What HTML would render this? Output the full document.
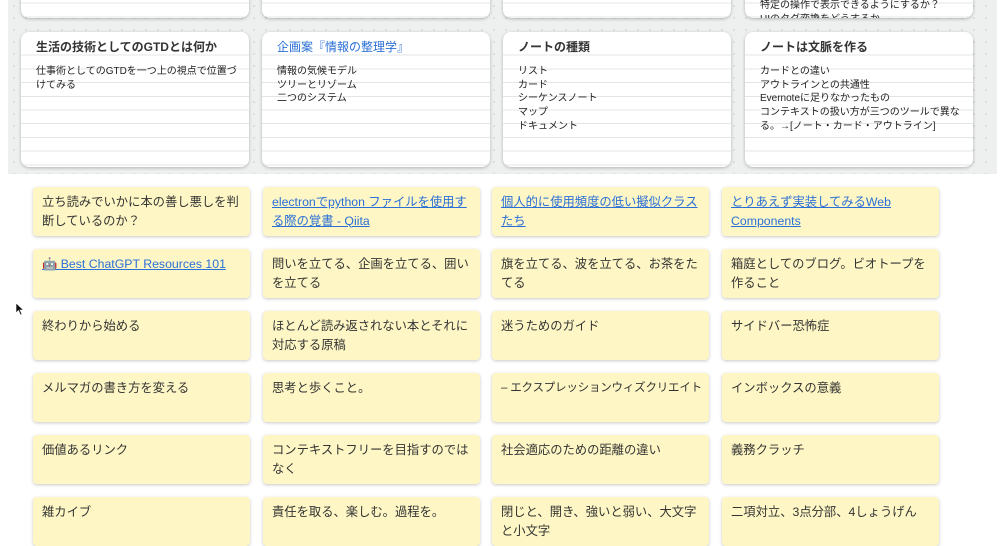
<!DOCTYPE html>
<html><head><meta charset="utf-8"><style>
*{margin:0;padding:0;box-sizing:border-box}
body{width:1000px;height:528px;overflow:hidden;background:#fff;font-family:"Liberation Sans","Noto Sans CJK JP",sans-serif;position:relative}
.gray{position:absolute;left:8px;top:0;width:989px;height:174px;background-color:#eef0f0;background-image:radial-gradient(circle,#d4d8d8 0.8px,transparent 1px);background-size:12px 12px}
.c{position:absolute;width:228px;background:#fff;border-radius:8px;box-shadow:0 1px 3px rgba(0,0,0,.25);overflow:hidden;
background-image:repeating-linear-gradient(to bottom,transparent 0,transparent 12.7px,#e3e5e5 12.7px,#e3e5e5 13.7px);background-position:0 10px;padding:8px 10px 0 15px;font-size:10px;color:#222;line-height:13.7px}
.c h3{font-size:12px;font-weight:bold;color:#333;margin-bottom:11px;line-height:14px}
.c h3.l{color:#2a6fd6;font-weight:normal}
.y{position:absolute;width:217px;height:49px;background:#fef7c5;border-radius:4px;box-shadow:0 1px 3px rgba(0,0,0,.22);padding:6px 9px;font-size:12.3px;line-height:18.5px;color:#333}
.y a{color:#2a6fd6;text-decoration:underline}
</style></head><body>
<div class="gray"></div>
<div class="c" style="left:21px;top:-20px;height:38px"></div>
<div class="c" style="left:262px;top:-20px;height:38px"></div>
<div class="c" style="left:503px;top:-20px;height:38px"></div>
<div class="c" style="left:745px;top:-20px;height:38px;padding-top:19px">特定の操作で表示できるようにするか？<br>UIのタグ変換をどうするか</div>

<div class="c" style="left:21px;top:32px;height:135px"><h3>生活の技術としてのGTDとは何か</h3>仕事術としてのGTDを一つ上の視点で位置づけてみる</div>
<div class="c" style="left:262px;top:32px;height:135px"><h3 class="l">企画案『情報の整理学』</h3>情報の気候モデル<br>ツリーとリゾーム<br>二つのシステム</div>
<div class="c" style="left:503px;top:32px;height:135px"><h3>ノートの種類</h3>リスト<br>カード<br>シーケンスノート<br>マップ<br>ドキュメント</div>
<div class="c" style="left:745px;top:32px;height:135px"><h3>ノートは文脈を作る</h3>カードとの違い<br>アウトラインとの共通性<br>Evernoteに足りなかったもの<br>コンテキストの扱い方が三つのツールで異なる。→[ノート・カード・アウトライン]</div>

<div class="y" style="left:33px;top:187px">立ち読みでいかに本の善し悪しを判断しているのか？</div>
<div class="y" style="left:263px;top:187px"><a>electronでpython ファイルを使用する際の覚書 - Qiita</a></div>
<div class="y" style="left:492px;top:187px"><a>個人的に使用頻度の低い擬似クラスたち</a></div>
<div class="y" style="left:722px;top:187px"><a>とりあえず実装してみるWeb Components</a></div>

<div class="y" style="left:33px;top:249px"><a>🤖 Best ChatGPT Resources 101</a></div>
<div class="y" style="left:263px;top:249px">問いを立てる、企画を立てる、囲いを立てる</div>
<div class="y" style="left:492px;top:249px">旗を立てる、波を立てる、お茶をたてる</div>
<div class="y" style="left:722px;top:249px">箱庭としてのブログ。ビオトープを作ること</div>

<div class="y" style="left:33px;top:311px">終わりから始める</div>
<div class="y" style="left:263px;top:311px">ほとんど読み返されない本とそれに対応する原稿</div>
<div class="y" style="left:492px;top:311px">迷うためのガイド</div>
<div class="y" style="left:722px;top:311px">サイドバー恐怖症</div>

<div class="y" style="left:33px;top:373px">メルマガの書き方を変える</div>
<div class="y" style="left:263px;top:373px">思考と歩くこと。</div>
<div class="y" style="left:492px;top:373px;white-space:nowrap;font-size:11.5px;letter-spacing:-0.2px">– エクスプレッションウィズクリエイト</div>
<div class="y" style="left:722px;top:373px">インボックスの意義</div>

<div class="y" style="left:33px;top:435px">価値あるリンク</div>
<div class="y" style="left:263px;top:435px">コンテキストフリーを目指すのではなく</div>
<div class="y" style="left:492px;top:435px">社会適応のための距離の違い</div>
<div class="y" style="left:722px;top:435px">義務クラッチ</div>

<div class="y" style="left:33px;top:497px">雑カイブ</div>
<div class="y" style="left:263px;top:497px">責任を取る、楽しむ。過程を。</div>
<div class="y" style="left:492px;top:497px">閉じと、開き、強いと弱い、大文字と小文字</div>
<div class="y" style="left:722px;top:497px">二項対立、3点分部、4しょうげん</div>

<svg style="position:absolute;left:15px;top:303px" width="9" height="13" viewBox="0 0 9 13"><path d="M1 0 L1 10 L3.5 7.5 L5.5 12 L7 11.3 L5 7 L8.5 7 Z" fill="#111" stroke="#fff" stroke-width=".6"/></svg>
</body></html>
